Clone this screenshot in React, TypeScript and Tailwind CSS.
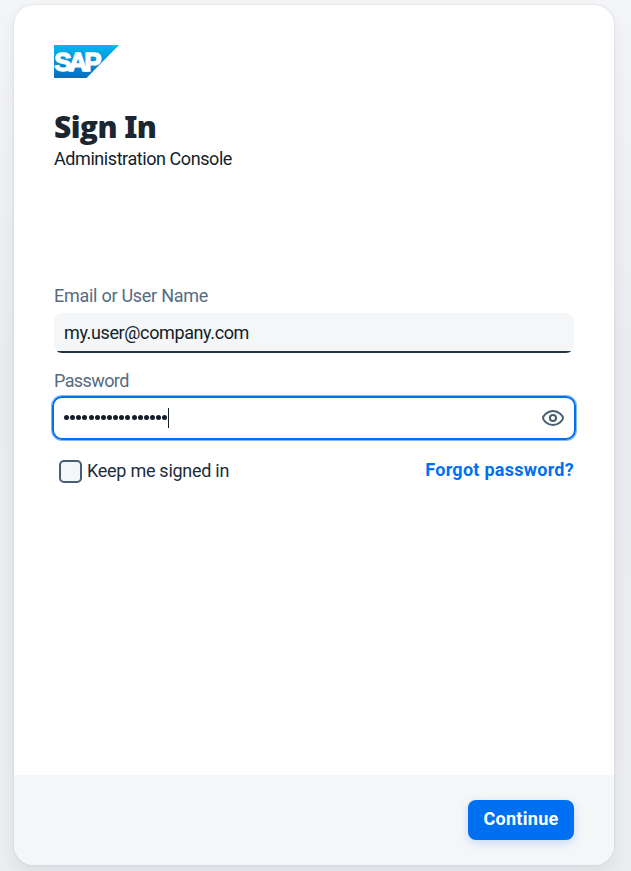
import { useId } from "react";

function Logo() {
  const id = useId();
  return (
    <svg className="block h-[33px] w-[65px]" viewBox="0 0 65 33" role="img" aria-label="SAP">
      <defs>
        <linearGradient id={id} x1="0" y1="0" x2="0" y2="1">
          <stop offset="0" stopColor="#00b8f1" />
          <stop offset="0.45" stopColor="#0695d9" />
          <stop offset="1" stopColor="#0a6ebc" />
        </linearGradient>
      </defs>
      <path d="M0 0H65L32.5 33H0Z" fill={`url(#${id})`} />
      <text x="0.3" y="26.200" letterSpacing="-3.100" fill="white" stroke="white" strokeWidth="1.300" fontSize="26" fontWeight="700" fontFamily="Liberation Sans, sans-serif">
        SAP
      </text>
    </svg>
  );
}

function EyeIcon() {
  return (
    <svg className="h-[18px] w-[24px]" viewBox="0 0 24 18" fill="none" stroke="#475e75" strokeWidth="2" strokeLinejoin="round">
      <path d="M2 9C2 7 6 2 12 2s10 5 10 7-4 7-10 7S2 11 2 9Z" />
      <circle cx="12" cy="9" r="3.100" />
    </svg>
  );
}

export default function App() {
  return (
    <main className="h-[871px] w-[631px] overflow-hidden bg-[linear-gradient(180deg,#f4f5f7_0%,#ebecf0_40%,#ebedf0_100%)] pt-[5px] pl-[14px] font-['Roboto',sans-serif] text-[18px] text-[#1d2d3e]">
      <section className="flex h-[860px] w-[600px] flex-col overflow-hidden rounded-[20px] bg-white shadow-[0_0_2px_rgba(34,53,72,0.16),0_8px_16px_rgba(34,53,72,0.08)]">
        <div className="flex-1 px-10 pt-10">
          <Logo />
          <h1 className="mt-[29px] h-10 font-['Open_Sans',sans-serif] text-[30px] leading-10 font-extrabold tracking-[-0.6px] whitespace-nowrap text-[#1a2733]">
            Sign <span className="font-['Noto_Sans',sans-serif] font-black">I</span>n
          </h1>
          <p className="h-6 leading-6 tracking-[-0.430px] text-[#131e29]">Administration Console</p>
          <form className="mt-[112px]">
            <label className="block h-6 pt-px leading-6 tracking-[-0.270px] text-[#556b82]">Email or User Name</label>
            <div className="mt-[6px] flex h-10 items-center rounded-[8px] bg-[linear-gradient(0deg,#223548_2px,#f5f6f7_2px)] px-[10px] pb-[2px] tracking-[-0.380px] text-[#131e29]">my.user@company.com</div>
            <label className="mt-[15px] block h-6 pt-px leading-6 tracking-[-0.600px] text-[#556b82]">Password</label>
            <div className="-mx-[2px] mt-[4px] flex h-11 items-center rounded-[10px] border-2 border-[#0070f2] px-[10px] pb-px shadow-[0_0_0_1px_rgba(0,112,242,0.5)]">
              <div className="flex gap-[1.150px]">
                {Array.from({ length: 17 }, (_, i) => (
                  <span key={i} className="size-[5px] rounded-full bg-[#131e29]" />
                ))}
              </div>
              <span className="ml-px h-5 w-px bg-[#131e29]" />
              <span className="-mr-px ml-auto"><EyeIcon /></span>
            </div>
            <div className="mt-[18px] flex h-6 items-center justify-between pl-[5px]">
              <label className="flex items-center gap-[5px]">
                <span className="mt-[2px] size-[23px] rounded-[5px] border-2 border-[#475e75] bg-[#f5f6f7]" />
                <span className="tracking-[-0.270px]">Keep me signed in</span>
              </label>
              <a className="pb-[2px] font-bold tracking-[0.270px] text-[#0070f2]">Forgot password?</a>
            </div>
          </form>
        </div>
        <footer className="flex h-[90px] justify-end bg-[#f5f6f8] px-10 pt-[25px]">
          <button className="h-10 w-[106px] rounded-[8px] bg-[#0070f2] pb-[3px] font-bold tracking-[0.300px] text-white shadow-[0_3px_10px_rgba(0,112,242,0.2)]">Continue</button>
        </footer>
      </section>
    </main>
  );
}
